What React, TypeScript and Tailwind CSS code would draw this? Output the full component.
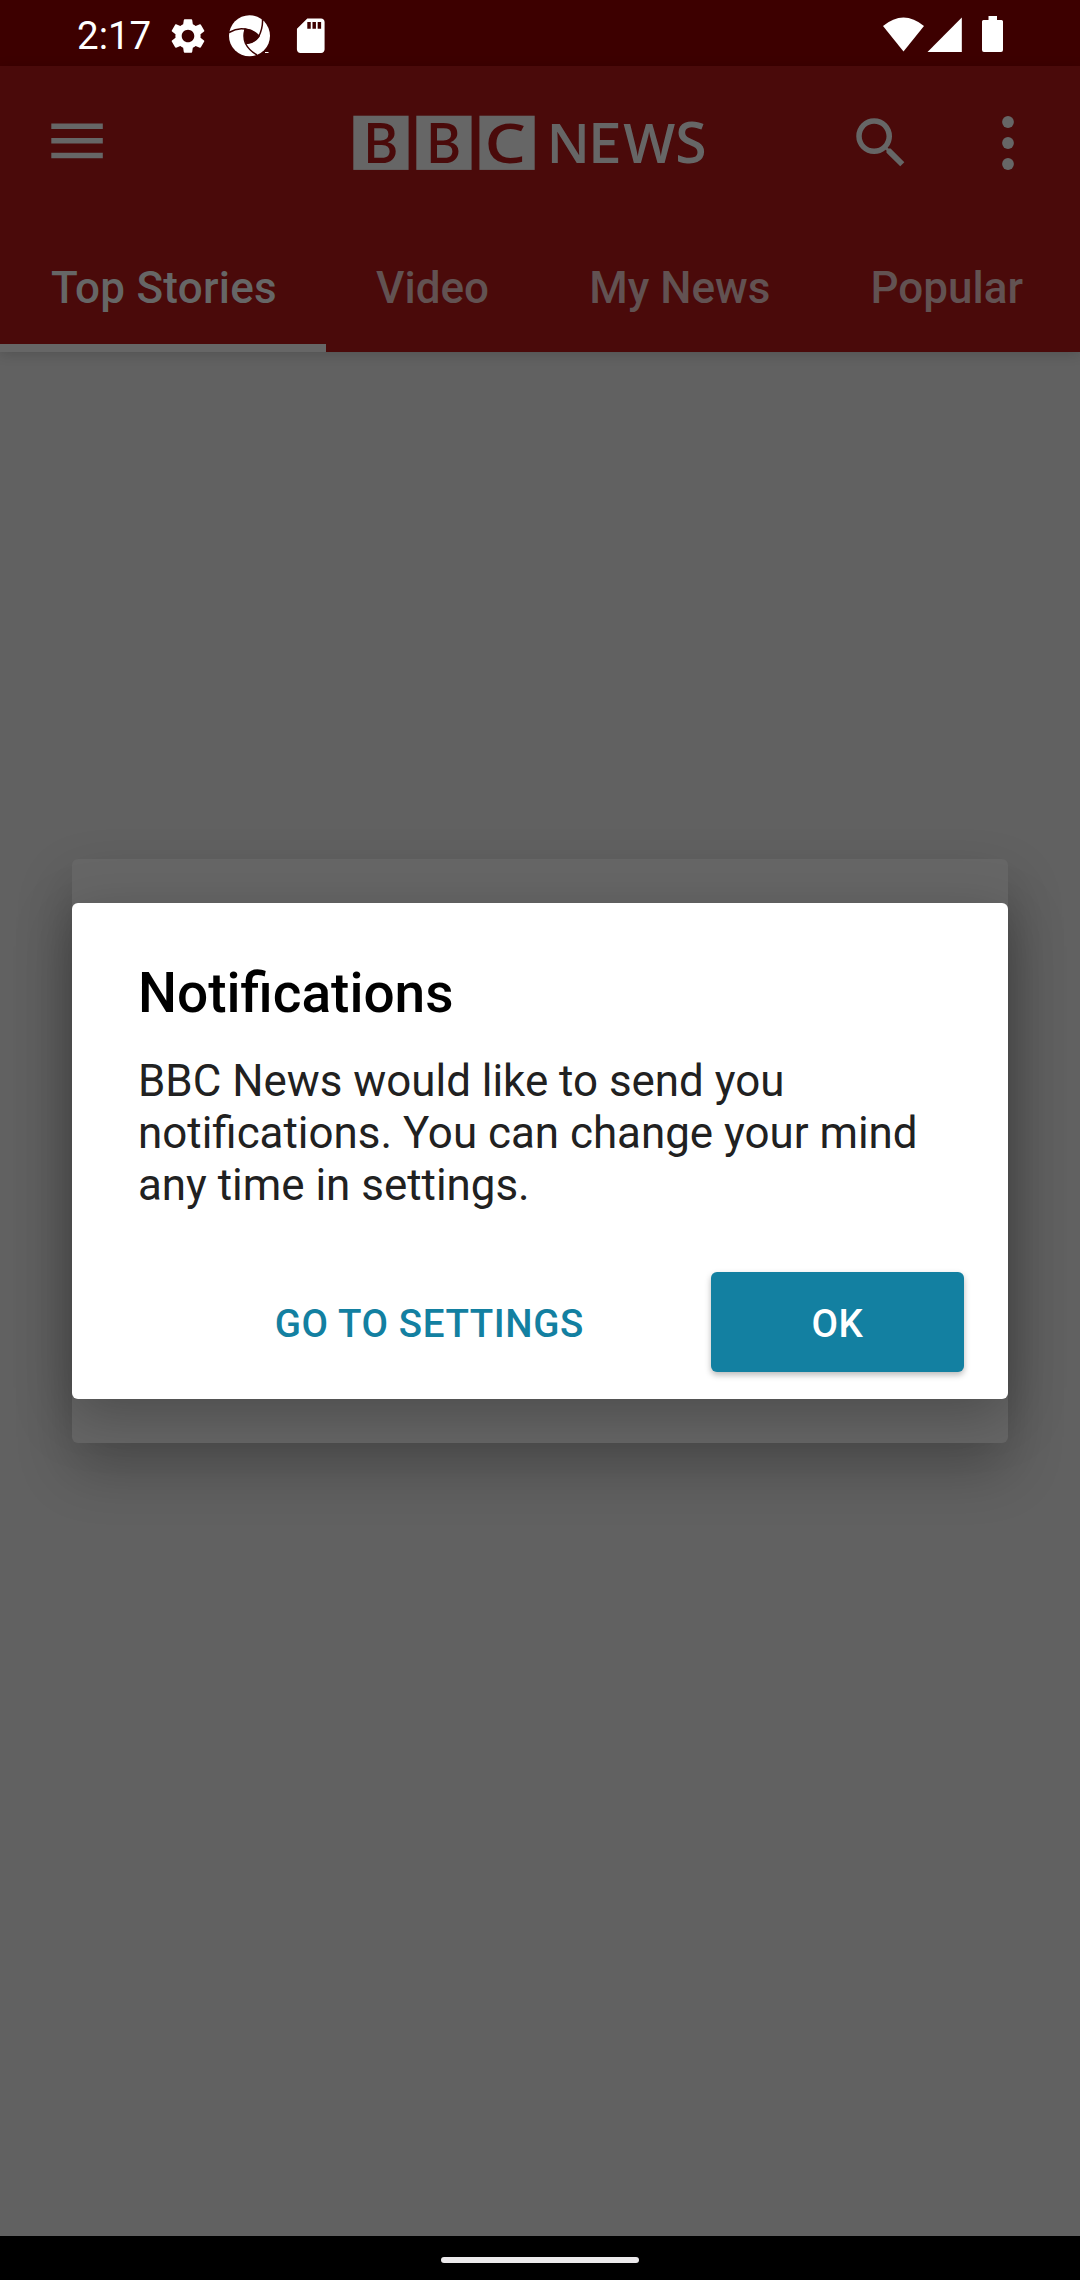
import React from "react";

const tabs = [
  { label: "Top Stories", active: true },
  { label: "Video", active: false },
  { label: "My News", active: false },
  { label: "Popular", active: false },
];

function StatusBar() {
  return (
    <div className="flex h-[66px] shrink-0 items-center bg-[#3d0000] text-white">
      <div className="ml-[77px] w-[92px] pt-[6px] text-[38.5px] leading-[44px]">2:17</div>
      <svg className="mt-[5px] ml-[-2px] h-[42px] w-[42px]" viewBox="0 0 24 24" fill="currentColor">
        <path d="M19.14 12.94c.04-.3.06-.61.06-.94 0-.32-.02-.64-.07-.94l2.03-1.58a.49.49 0 0 0 .12-.61l-1.92-3.32a.488.488 0 0 0-.59-.22l-2.39.96c-.5-.38-1.03-.7-1.62-.94l-.36-2.54a.484.484 0 0 0-.48-.41h-3.84c-.24 0-.43.17-.47.41l-.36 2.54c-.59.24-1.13.57-1.62.94l-2.39-.96c-.22-.08-.47 0-.59.22L2.74 8.87c-.12.21-.08.47.12.61l2.03 1.58c-.05.3-.09.63-.09.94s.02.64.07.94l-2.03 1.58a.49.49 0 0 0-.12.61l1.92 3.32c.12.22.37.29.59.22l2.39-.96c.5.38 1.03.7 1.62.94l.36 2.54c.05.24.24.41.48.41h3.84c.24 0 .44-.17.47-.41l.36-2.54c.59-.24 1.13-.56 1.62-.94l2.39.96c.22.08.47 0 .59-.22l1.92-3.32c.12-.22.07-.47-.12-.61l-2.01-1.58zM12 15.6c-1.98 0-3.6-1.62-3.6-3.6s1.62-3.6 3.6-3.6 3.6 1.62 3.6 3.6-1.62 3.6-3.6 3.6z" />
      </svg>
      <svg className="mt-[5px] ml-[20px] h-[42px] w-[42px]" viewBox="0 0 42 42">
        <circle cx="20.5" cy="20.8" r="20.5" fill="#fff" />
        <g fill="none" stroke="#3d0000" strokeWidth="1.5">
          <path d="M0 17.5Q8 12.5 16 14Q25 15 30.5 21.5" />
          <path d="M33.5 4.5Q34 13 29.5 22Q25 28 17.5 28.5" />
          <path d="M28 40Q20 35.5 16.5 28.5Q13.5 21 16.5 13.5" />
        </g>
        <path d="M15.5 13.5Q25 14.5 30 21.5Q26 28 17 29Q13.5 21 15.5 13.5Z" fill="#3d0000" />
        <path d="M36 37.5h3.5" stroke="#fff" strokeWidth="1" />
      </svg>
      <svg className="mt-[5px] ml-[19px] h-[41.5px] w-[41.5px]" viewBox="0 0 24 24" fill="currentColor">
        <path d="M18 2h-8L4.02 8 4 20c0 1.1.9 2 2 2h12c1.1 0 2-.9 2-2V4c0-1.1-.9-2-2-2zm-6 6h-2V4h2v4zm3 0h-2V4h2v4zm3 0h-2V4h2v4z" />
      </svg>
      <div className="grow" />
      <svg className="mr-[76px] h-[66px] w-[122px]" viewBox="0 0 122 66" fill="currentColor">
        <path d="M1 26Q21.5 9 42 26L21.5 51.5Z" />
        <path d="M45.5 52L79.8 17.5V52Z" />
        <path d="M106.5 16h8.5v4h4.5a1.5 1.5 0 0 1 1.5 1.5v28.5a2 2 0 0 1-2 2h-17a2 2 0 0 1-2-2V21.5a1.5 1.5 0 0 1 1.5-1.5h5z" />
      </svg>
    </div>
  );
}

function Logo() {
  return (
    <svg className="h-[100px] w-[360px]" viewBox="0 -22 360 100" role="img" aria-label="BBC NEWS">
      <g fill="#666666">
        <rect x="0.3" y="0.7" width="55.3" height="54.2" />
        <rect x="63.3" y="0.7" width="55.3" height="54.2" />
        <rect x="126.4" y="0.7" width="55.3" height="54.2" />
      </g>
      <g fill="#4a0a0a" fontWeight="600" fontSize="55">
        <text transform="translate(0 47.6) scale(.965 1)" x="10.8 76" fontFamily="Lato">BB</text>
        <text transform="translate(131.5 47.6) scale(1.19 1)" fontFamily="Open Sans">C</text>
      </g>
      <text y="47.8" fill="#666666" fontFamily="Open Sans" fontWeight="600" fontSize="55">
        <tspan x="193.8">N</tspan>
        <tspan x="235.7" fontFamily="Lato">E</tspan>
        <tspan x="270.2">W</tspan>
        <tspan x="322.2" fontSize="57">S</tspan>
      </text>
    </svg>
  );
}

function AppBar() {
  return (
    <header className="relative h-[286px] shrink-0 bg-[#4a0a0a] shadow-[0_2px_12px_rgba(0,0,0,0.16)]">
      <div className="flex h-[154px] items-center text-[#666666]">
        <svg className="mt-[-4px] ml-[51px] h-[36px] w-[52px]" viewBox="0 0 52 36" fill="currentColor">
          <path d="M.3.5h51.5V6H.3zM.3 15h51.5v5.5H.3zM.3 29.7h51.5v5.5H.3z" />
        </svg>
        <div className="ml-[250px]">
          <Logo />
        </div>
        <svg className="ml-[135px] h-[66px] w-[66px]" viewBox="0 0 24 24" fill="currentColor">
          <path d="M15.5 14h-.79l-.28-.27A6.471 6.471 0 0 0 16 9.5 6.5 6.5 0 1 0 9.5 16c1.61 0 3.09-.59 4.23-1.57l.27.28v.79l5 4.99L20.49 19l-4.99-5zm-6 0C7.01 14 5 11.99 5 9.5S7.01 5 9.5 5 14 7.01 14 9.5 11.99 14 9.5 14z" />
        </svg>
        <svg className="ml-[88px] h-[56px] w-[12px]" viewBox="0 0 12 56" fill="currentColor">
          <circle cx="6" cy="7" r="5.9" />
          <circle cx="6" cy="28" r="5.9" />
          <circle cx="6" cy="49" r="5.9" />
        </svg>
      </div>
      <nav className="flex h-[132px]">
        {tabs.map((t) => (
          <div
            key={t.label}
            className={
              "flex shrink-0 items-center border-b-8 pt-[11px] text-[44px] font-medium whitespace-nowrap " +
              (t.active
                ? "w-[326px] border-[#666666] pl-[51px] tracking-[0.25px] text-[#666666]"
                : "border-transparent px-[50.1px] text-[#625252]")
            }
          >
            {t.label}
          </div>
        ))}
      </nav>
    </header>
  );
}

function NotificationDialog() {
  return (
    <div className="flex h-[584px] w-[936px] flex-col justify-center rounded-[6px] bg-[#666666] shadow-[0_26px_56px_rgba(0,0,0,0.24)]">
      <section className="flex h-[496px] flex-col rounded-[6px] bg-white pl-[66px] shadow-[0_16px_56px_rgba(0,0,0,0.26)]">
        <h1 className="pt-[58px] text-[55px] leading-[64px] font-medium text-black">Notifications</h1>
        <p className="pt-[30px] text-[43.9px] leading-[52px] text-[#212121]">
          BBC News would like to send you
          <br />
          notifications. You can change your mind
          <br />
          any time in settings.
        </p>
        <div className="mt-[61px] mr-[44px] flex items-center justify-end text-[38.5px] font-medium tracking-[0.6px]">
          <button className="mr-[127px] pt-[3px] text-[#1380a1]">GO TO SETTINGS</button>
          <button className="h-[100px] w-[253px] rounded-[6px] bg-[#1380a1] pt-[3px] text-white shadow-[0_3px_6px_rgba(0,0,0,0.28)]">OK</button>
        </div>
      </section>
    </div>
  );
}

export default function App() {
  return (
    <div className="flex h-[2280px] w-[1080px] flex-col overflow-hidden bg-[#616161] font-[Roboto,sans-serif]">
      <StatusBar />
      <AppBar />
      <main className="flex grow flex-col items-center pt-[507px]">
        <NotificationDialog />
      </main>
      <footer className="flex h-[44px] shrink-0 justify-center bg-black pt-[21px]">
        <div className="h-[6px] w-[198px] rounded-full bg-[#ebe9eb]" />
      </footer>
    </div>
  );
}
